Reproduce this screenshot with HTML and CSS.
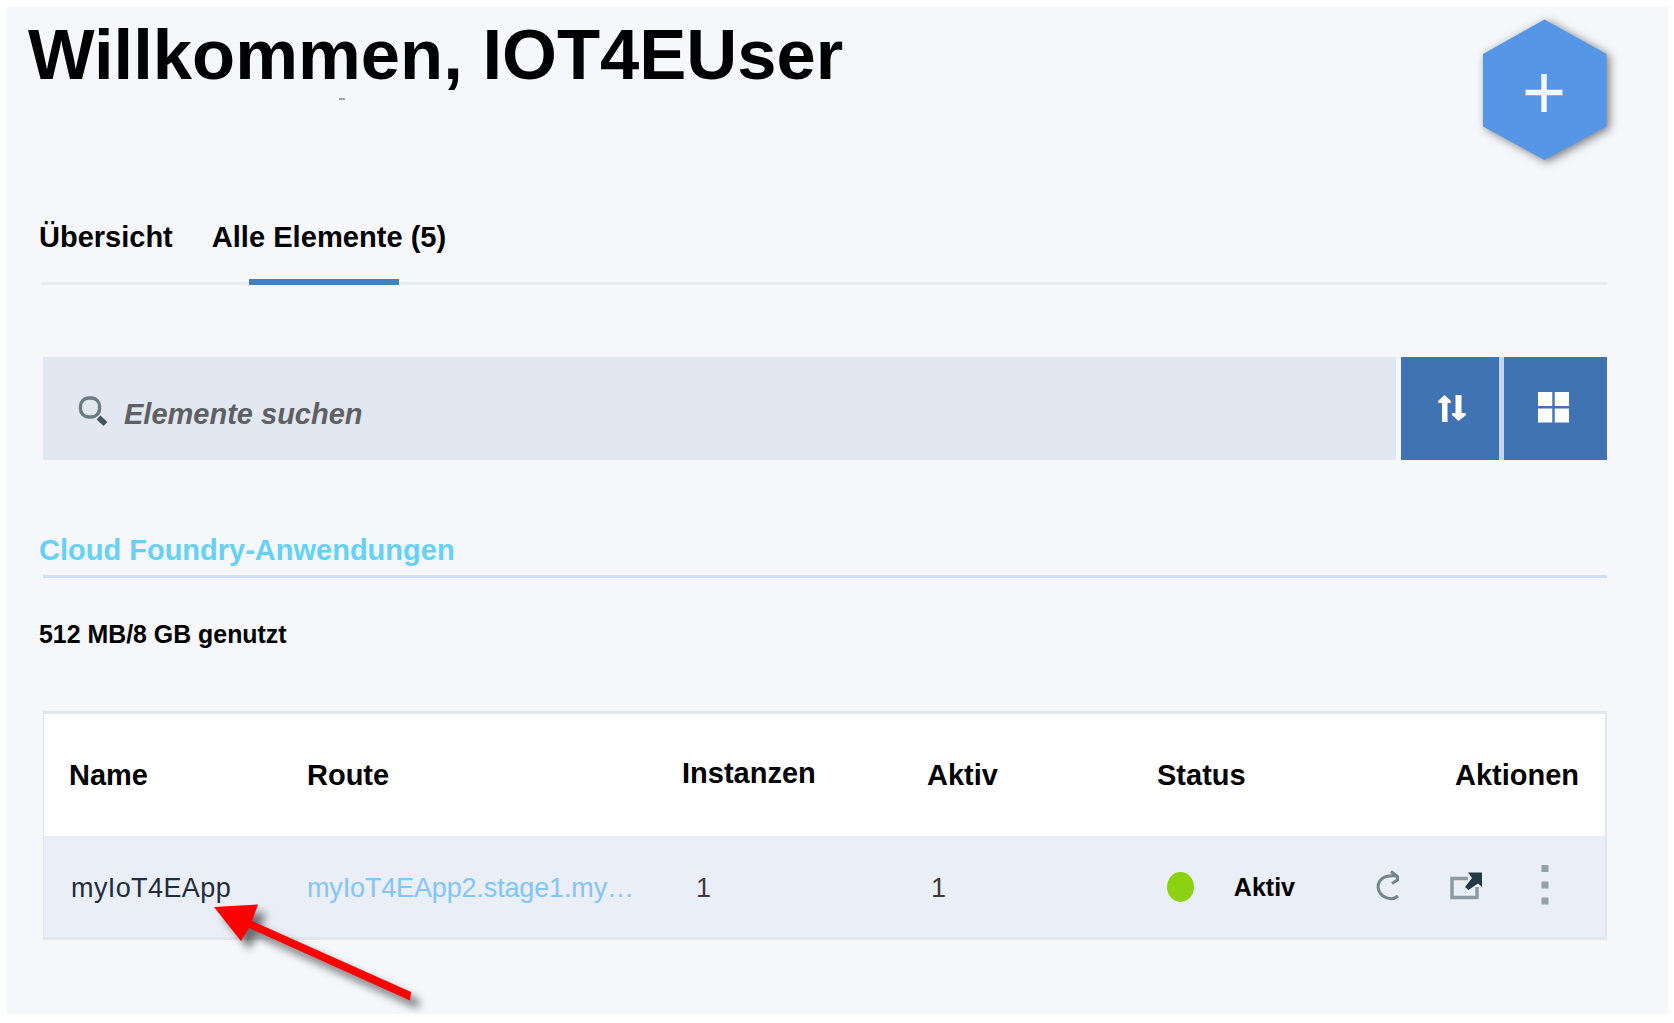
FILE: index.html
```html
<!DOCTYPE html>
<html lang="de">
<head>
<meta charset="utf-8">
<title>Willkommen</title>
<link rel="stylesheet" href="styles.css">
</head>
<body>
<main class="panel">
  <header class="header">
    <h1 class="title">Willkommen, IOT4EUser<span class="title-mark"></span></h1>
    <svg class="add" width="160" height="180" viewBox="0 0 160 180" role="img" aria-label="Hinzufügen">
      <path class="add-shape" d="M79.5 12.5 141.5 47V119.5L79.5 153 18 119.500V47Z"/>
      <path class="add-plus" d="M60.5 85.500H97.500M79 67V105"/>
    </svg>
  </header>
  <nav class="tabs">
    <a class="tab tab-overview">Übersicht</a>
    <a class="tab tab-active">Alle Elemente (5)</a>
  </nav>
  <div class="toolbar">
    <div class="search">
      <svg class="search-icon" width="32" height="32" viewBox="0 0 32 32">
        <rect x="2.500" y="3" width="19" height="19" rx="8" fill="none" stroke="#6a7b84" stroke-width="3.400"/>
        <path d="M20.500 22.500 27.500 29" stroke="#42555f" stroke-width="5.500"/>
      </svg>
      <span class="placeholder">Elemente suchen</span>
    </div>
    <div class="buttons">
      <div class="button button-sort">
        <svg width="28" height="28" viewBox="0 0 28 28" fill="#fff">
          <path d="M4 27V8H0V6L6.500 0 13 6V8H9.500V27ZM17.500 0V18H14V20L20.500 26 28 20V18H23.500V0Z"/>
        </svg>
      </div>
      <div class="button button-grid">
        <svg width="31" height="31" viewBox="0 0 31 31" fill="#fff">
          <path d="M0 0H14.300V14H0ZM16.700 0H31V14H16.700ZM0 16.500H14.300V30.500H0ZM16.700 16.500H31V30.500H16.700Z"/>
        </svg>
      </div>
    </div>
  </div>
  <h2 class="section">Cloud Foundry-Anwendungen</h2>
  <p class="usage">512 MB/8 GB genutzt</p>
  <div class="table">
    <div class="row head">
      <span class="cell name">Name</span>
      <span class="cell">Route</span>
      <span class="cell instances">Instanzen</span>
      <span class="cell">Aktiv</span>
      <span class="cell">Status</span>
      <span class="cell actions-title">Aktionen</span>
    </div>
    <div class="row item">
      <span class="cell app">myIoT4EApp</span>
      <a class="cell route">myIoT4EApp2.stage1.my…</a>
      <span class="cell count">1</span>
      <span class="cell count">1</span>
      <span class="cell status"><i class="dot"></i>Aktiv</span>
      <span class="cell actions">
        <svg class="restart" width="26" height="32" viewBox="0 0 26 32" fill="none" stroke="#74858e" stroke-width="3">
          <path d="M23 26C19 29.500 13 29.500 8 26 1.500 20.500 1.500 12.500 8 8 12 5.500 16 5.500 22 6"/>
          <path d="M16 1.500 22.500 6.500V10L17 13.500"/>
        </svg>
        <svg class="launch" width="36" height="30" viewBox="0 0 36 30">
          <path d="M20 7.500H4V26.500H29V16" fill="none" stroke="#8c9aa2" stroke-width="3.500"/>
          <path d="M20 1.500H34V16L30 12.500 20.500 19 17 16 24 7Z" fill="#243a45"/>
        </svg>
        <svg class="more" width="8" height="40" viewBox="0 0 8 40" fill="#93a1aa">
          <path d="M.5 0H7.500V7H.5ZM.5 16.500H7.500V23.500H.5ZM.5 32.500H7.500V39.500H.5Z"/>
        </svg>
      </span>
    </div>
  </div>
  <svg class="pointer" width="250" height="118" viewBox="0 0 250 118">
    <path d="M14 12 58 9.500 52 26 211 97 210 105.500 49 33 41 46Z"/>
  </svg>
</main>
</body>
</html>
```
FILE: styles.css
```css
* {
  box-sizing: border-box;
}

body {
  margin: 0;
  padding: 7px 6px 9px 7px;
  background: #fff;
  color: #000;
  font: bold 29px/32px "Liberation Sans", Arial, sans-serif;
  white-space: nowrap;
}

.panel {
  position: relative;
  height: 1007px;
  padding: 0 61px 0 36px;
  background: #f5f7fb;
}

.header {
  display: flex;
  justify-content: space-between;
  height: 214px;
}

.title {
  position: relative;
  margin: 8px 0 0 -15px;
  font-size: 70.6px;
  line-height: 80px;
  height: 90px;
}

.title-mark {
  position: absolute;
  left: 311px;
  top: 83px;
  width: 6px;
  height: 2px;
  background: #a2a2aa;
}

.add {
  margin: 0 -18px 0 0;
  overflow: visible;
}

.add-shape {
  fill: #5596e6;
  filter: drop-shadow(3px 2px 5px rgba(0, 0, 0, .5));
}

.add-plus {
  fill: none;
  stroke: #f4f8fe;
  stroke-width: 5.500px;
}

.tabs {
  display: flex;
  gap: 39px;
  height: 64px;
  margin-left: -1px;
  border-bottom: 3px solid #e8ecf0;
}

.tab-overview {
  margin-left: -3px;
}

.tab-active {
  position: relative;
  font-size: 29.1px;
}

.tab-active::after {
  content: "";
  position: absolute;
  left: 37px;
  top: 58px;
  width: 150px;
  height: 6px;
  background: #4a7dba;
}

.toolbar {
  display: flex;
  justify-content: space-between;
  height: 103px;
  margin-top: 72px;
}

.search {
  display: flex;
  gap: 14px;
  width: 1353px;
  padding: 38px 0 0 35px;
  background: #e2e8f2;
}

.placeholder {
  padding-top: 3px;
  color: #5f6063;
  font-style: italic;
}

.buttons {
  display: flex;
  justify-content: space-between;
  width: 206px;
  background: #c8d5e8;
}

.button {
  background: #3f73b4;
  padding-top: 38px;
}

.button-sort {
  width: 98px;
  padding-left: 37px;
}

.button-grid {
  width: 103px;
  padding: 35px 0 0 34px;
}

.section {
  height: 44px;
  margin: 74px 0 0;
  border-bottom: 3px solid #cce1f7;
  color: #65d1f4;
  font-size: 29px;
  text-indent: -4px;
}

.usage {
  margin: 42px 0 0 -4px;
  font-size: 24.9px;
  line-height: 28px;
}

.table {
  margin-top: 63px;
  border: solid #e2e7ed;
  border-width: 3px 2px 3px 1px;
}

.row {
  display: grid;
  padding-left: 24px;
}

.head {
  grid-template-columns: 239px 375px 245px 230px 298px auto;
  height: 122px;
  padding-top: 45px;
  background: #fff;
}

.name {
  padding-left: 1px;
}

.instances {
  margin-top: -2px;
}

.item {
  grid-template-columns: 239px 388px 235px 235px 130px auto;
  height: 101px;
  padding-top: 37px;
  background: #eaeff7;
  font-size: 27px;
  font-weight: normal;
  line-height: 30px;
}

.app {
  padding-left: 3px;
  color: #222c3c;
  letter-spacing: .4px;
}

.route {
  color: #82c4fb;
  letter-spacing: -.15px;
}

.count {
  padding-left: 1px;
  color: #40383a;
}

.status {
  display: flex;
  gap: 40px;
  margin: -1px 0 0 2px;
  font-size: 25px;
  font-weight: bold;
}

.dot {
  width: 30px;
  height: 30px;
  border-radius: 50%;
  background: #8cd211;
}

.actions {
  display: flex;
  align-items: center;
  height: 40px;
  margin: -8px 0 0 80px;
}

.restart,
.launch {
  margin-top: 1px;
}

.launch {
  margin-left: 47px;
}

.more {
  margin-left: 57px;
}

.pointer {
  position: absolute;
  left: 193px;
  top: 888px;
  overflow: visible;
  fill: #fe0000;
  filter: drop-shadow(8px 8px 4px rgba(0, 0, 0, .55));
}
```
